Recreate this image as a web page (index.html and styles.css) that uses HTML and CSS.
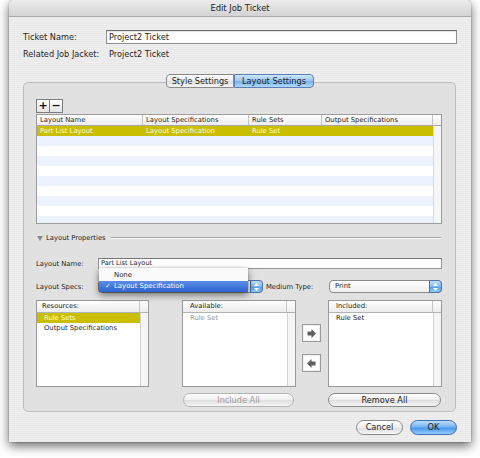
FILE: index.html
```html
<!DOCTYPE html>
<html>
<head>
<meta charset="utf-8">
<title>Edit Job Ticket</title>
<link rel="stylesheet" href="styles.css">
</head>
<body>
<div class="window">
  <div class="titlebar">Edit Job Ticket</div>
  <div class="content">
    <div class="field-row ticket">
      <span class="label">Ticket Name:</span>
      <div class="textbox">Project2 Ticket</div>
    </div>
    <div class="field-row related">
      <span class="label">Related Job Jacket:</span>
      <span class="value">Project2 Ticket</span>
    </div>
    <div class="tabs">
      <div class="tab">Style Settings</div>
      <div class="tab active">Layout Settings</div>
    </div>
    <div class="groupbox">
      <div class="plusminus"><span class="pm">+</span><span class="pm">−</span></div>
      <div class="table">
        <div class="thead">
          <div class="th c1">Layout Name</div>
          <div class="th c2">Layout Specifications</div>
          <div class="th c3">Rule Sets</div>
          <div class="th c4">Output Specifications</div>
          <div class="th corner"></div>
        </div>
        <div class="tbody">
          <div class="rows">
            <div class="row sel"><span class="c1">Part List Layout</span><span class="c2">Layout Specification</span><span class="c3">Rule Set</span><span class="c4"></span></div>
            <div class="row alt"></div>
            <div class="row"></div>
            <div class="row alt"></div>
            <div class="row"></div>
            <div class="row alt"></div>
            <div class="row"></div>
            <div class="row alt"></div>
            <div class="row"></div>
            <div class="row alt"></div>
          </div>
          <div class="vscroll"></div>
        </div>
      </div>
      <div class="disclosure">
        <span class="tri"></span>
        <span class="dtext">Layout Properties</span>
        <span class="sepline"></span>
      </div>
      <div class="prop-row name-row">
        <span class="plabel">Layout Name:</span>
        <div class="smallbox">Part List Layout</div>
      </div>
      <div class="prop-row specs-row">
        <span class="plabel">Layout Specs:</span>
        <div class="popup specs">
          <span class="ptext"></span>
          <span class="stepper"><svg width="5" height="8" viewBox="0 0 5 8"><path d="M2.5 0 L5 3 H0 Z M0 5 H5 L2.5 8 Z" fill="#fff"/></svg></span>
          <div class="menu">
            <div class="mitem">None</div>
            <div class="mitem sel"><span class="check">✓</span>Layout Specification</div>
          </div>
        </div>
        <span class="plabel medium">Medium Type:</span>
        <div class="popup medium-pop">
          <span class="ptext">Print</span>
          <span class="stepper"><svg width="5" height="8" viewBox="0 0 5 8"><path d="M2.5 0 L5 3 H0 Z M0 5 H5 L2.5 8 Z" fill="#fff"/></svg></span>
        </div>
      </div>
      <div class="lists">
        <div class="list res">
          <div class="lhead"><span class="t first">Resources:</span><span class="sc"></span></div>
          <div class="lbody">
            <div class="litems">
              <div class="litem sel">Rule Sets</div>
              <div class="litem">Output Specifications</div>
            </div>
            <div class="lscroll"></div>
          </div>
        </div>
        <div class="list avail">
          <div class="lhead"><span class="t">Available:</span><span class="sc"></span></div>
          <div class="lbody">
            <div class="litems">
              <div class="litem dis">Rule Set</div>
            </div>
            <div class="lscroll"></div>
          </div>
        </div>
        <div class="arrows">
          <div class="abtn"><svg width="9" height="9" viewBox="0 0 9 9"><path d="M0.5 2.5 H4.5 V0 L9 4.5 L4.5 9 V6.5 H0.5 Z" fill="#606060"/></svg></div>
          <div class="abtn"><svg width="9" height="9" viewBox="0 0 9 9"><path d="M8.5 2.5 H4.5 V0 L0 4.5 L4.5 9 V6.5 H8.5 Z" fill="#606060"/></svg></div>
        </div>
        <div class="list incl">
          <div class="lhead"><span class="t">Included:</span><span class="sc"></span></div>
          <div class="lbody">
            <div class="litems">
              <div class="litem">Rule Set</div>
            </div>
            <div class="lscroll"></div>
          </div>
        </div>
      </div>
      <div class="btnrow">
        <div class="pill include disabled">Include All</div>
        <div class="pill remove">Remove All</div>
      </div>
    </div>
    <div class="dlgbtns">
      <div class="pill dlg">Cancel</div>
      <div class="pill dlg ok">OK</div>
    </div>
  </div>
</div>
</body>
</html>
```
FILE: styles.css
```css
* { box-sizing: border-box; }
html, body { margin: 0; padding: 0; background: #fff; }
body {
  font-family: "DejaVu Sans", sans-serif;
  font-size: 8.2px;
  color: #1e1e1e;
  width: 480px;
  height: 458px;
  overflow: hidden;
}
.window {
  margin-left: 9px;
  width: 462px;
  height: 442px;
  border-radius: 5px 5px 0 0;
  background: repeating-linear-gradient(#eeeeee 0 1px, #e9e9e9 1px 2px);
  box-shadow: 0 4px 11px rgba(0,0,0,.6), 0 0 2px rgba(0,0,0,.35);
  display: flex;
  flex-direction: column;
}
.titlebar {
  height: 17px;
  line-height: 16px;
  text-align: center;
  font-size: 8.4px;
  color: #222;
  background: linear-gradient(#ececec, #d3d3d3);
  border-bottom: 1px solid #ababab;
  border-radius: 5px 5px 0 0;
}
.content {
  flex: 1;
  padding: 13px 14px 7px 14px;
  display: flex;
  flex-direction: column;
}
.field-row { display: flex; align-items: center; }
.field-row .label { width: 83px; }
.ticket { height: 14px; }
.textbox {
  flex: 1;
  height: 14px;
  border: 1px solid #909090;
  border-top-color: #6e6e6e;
  background: #fff;
  padding-left: 2px;
  line-height: 12px;
  box-shadow: inset 0 1px 1px rgba(0,0,0,.12);
}
.related { margin-top: 4px; height: 12px; }
.related .value { margin-left: 3px; }

.tabs {
  display: flex;
  justify-content: center;
  margin-top: 14px;
  height: 14px;
  position: relative;
  z-index: 1;
}
.tab {
  width: 68px;
  height: 14px;
  line-height: 12px;
  text-align: center;
  border: 1px solid #8a8a8a;
  border-radius: 4px 0 0 4px;
  background: linear-gradient(#fdfdfd, #ececec 50%, #dedede 51%, #f4f4f4);
}
.tab.active {
  width: 80px;
  border-radius: 0 4px 4px 0;
  border-color: #5b7fb6;
  background: linear-gradient(#cfe5fb, #99c6f2 50%, #76b1ef 51%, #b0dafc);
}

.groupbox {
  margin-top: -6px;
  margin-right: 1px;
  height: 330px;
  border: 1px solid #bdbdbd;
  border-radius: 5px;
  background: #e1e1e1;
  padding: 16px 13px 4px 12px;
  display: flex;
  flex-direction: column;
}
.plusminus { display: flex; height: 14px; margin-bottom: 1px; }
.pm {
  width: 14px;
  height: 14px;
  border: 1px solid #7d7d7d;
  background: linear-gradient(#ffffff, #e4e4e4);
  font-weight: bold;
  font-size: 11px;
  line-height: 12px;
  text-align: center;
  color: #111;
}
.pm + .pm { margin-left: -1px; }

.table { border: 1px solid #9c9c9c; background: #fff; }
.thead {
  display: flex;
  height: 11px;
  border-bottom: 1px solid #a8a8a8;
  background: linear-gradient(#ffffff, #ededed);
}
.th {
  font-size: 6.8px;
  line-height: 10px;
  padding-left: 3px;
  border-right: 1px solid #c3c3c3;
  white-space: nowrap;
}
.c1 { width: 106px; }
.c2 { width: 106px; }
.c3 { width: 73px; }
.c4 { width: 111px; }
.th.corner { flex: 1; border-right: none; }
.tbody { display: flex; height: 97px; }
.rows { width: 396px; overflow: hidden; }
.row { display: flex; height: 10px; font-size: 6.8px; line-height: 10px; }
.row span { padding-left: 3px; white-space: nowrap; }
.row.alt { background: #edf3fe; }
.row.sel { background: #c9bf00; color: #fffbdc; }
.vscroll { flex: 1; background: #f6f6f6; border-left: 1px solid #dadada; }

.disclosure { display: flex; align-items: center; height: 12px; margin-top: 8px; }
.tri {
  width: 0; height: 0;
  border-left: 3px solid transparent;
  border-right: 3px solid transparent;
  border-top: 5px solid #8a8a8a;
  margin-left: 1px;
  margin-right: 3px;
}
.dtext { font-size: 6.8px; }
.sepline {
  flex: 1;
  margin-left: 5px;
  margin-right: 1px;
  border-top: 1px solid #a3a3a3;
  border-bottom: 1px solid #f8f8f8;
}

.prop-row { display: flex; align-items: center; }
.plabel { width: 62px; font-size: 6.8px; }
.name-row { margin-top: 14px; height: 11px; }
.smallbox {
  flex: 1;
  height: 11px;
  background: #fff;
  border: 1px solid #959595;
  border-top-color: #777;
  font-size: 6.6px;
  line-height: 9px;
  padding-left: 2px;
}
.specs-row { margin-top: 11px; height: 13px; }
.popup {
  height: 13px;
  border: 1px solid #8b8b8b;
  border-radius: 4px;
  background: linear-gradient(#ffffff, #efefef);
  display: flex;
  position: relative;
}
.popup.specs { width: 165px; }
.plabel.medium { margin-left: 3px; width: 63px; }
.popup.medium-pop { flex: 1; }
.ptext { flex: 1; padding-left: 5px; font-size: 6.8px; line-height: 11px; }
.stepper {
  width: 13px;
  margin: -1px -1px -1px 0;
  border: 1px solid #4a71ad;
  border-radius: 0 4px 4px 0;
  background: linear-gradient(#c8e1fb, #7cb7f1 50%, #4f99ec 51%, #93ccfd);
  display: flex;
  align-items: center;
  justify-content: center;
}
.menu {
  position: absolute;
  left: 0;
  top: -13px;
  width: 149px;
  padding-top: 2px;
  background: rgba(250,250,250,.98);
  box-shadow: 0 3px 7px rgba(0,0,0,.5), 0 0 1px rgba(0,0,0,.3);
  z-index: 2;
}
.mitem {
  position: relative;
  height: 11px;
  line-height: 11px;
  padding-left: 15px;
  font-size: 6.9px;
  white-space: nowrap;
}
.mitem.sel { background: linear-gradient(#5a8de6, #2f63d1); color: #fff; }
.check { position: absolute; left: 6px; }

.lists { display: flex; height: 87px; margin-top: 7px; }
.list {
  border: 1px solid #9a9a9a;
  background: #fff;
  display: flex;
  flex-direction: column;
}
.list.res { width: 113px; }
.list.avail { width: 114px; margin-left: 33px; }
.list.incl { width: 114px; margin-left: 7px; }
.lhead {
  display: flex;
  height: 12px;
  border-bottom: 1px solid #b3b3b3;
  background: linear-gradient(#ffffff, #ececec);
  font-size: 6.8px;
  line-height: 11px;
}
.lhead .t { flex: 1; padding-left: 7px; border-right: 1px solid #c6c6c6; }
.lhead .t.first { padding-left: 5px; }
.lhead .sc { width: 8px; }
.lbody { flex: 1; display: flex; }
.litems { flex: 1; }
.lscroll { width: 8px; border-left: 1px solid #d4d4d4; background: #f5f5f5; }
.litem { height: 10px; line-height: 10px; padding-left: 7px; font-size: 6.8px; white-space: nowrap; }
.litem.sel { background: #c9bf00; color: #fffbdc; }
.litem.dis { color: #9a9a9a; }
.arrows {
  width: 19px;
  margin-left: 6px;
  padding-top: 24px;
  display: flex;
  flex-direction: column;
  gap: 12px;
}
.abtn {
  width: 19px;
  height: 18px;
  border: 1px solid #9b9b9b;
  background: #fff;
  box-shadow: inset 0 0 0 1px #f0f0f0;
  display: flex;
  align-items: center;
  justify-content: center;
}

.btnrow { display: flex; height: 14px; margin-top: 6px; }
.pill {
  height: 14px;
  border: 1px solid #8a8a8a;
  border-radius: 7px;
  background: linear-gradient(#ffffff, #eeeeee 50%, #dddddd 51%, #f6f6f6);
  text-align: center;
  line-height: 12px;
  font-size: 8.2px;
  color: #1e1e1e;
}
.include { width: 111px; margin-left: 147px; }
.include.disabled { color: #a0a0a0; border-color: #b4b4b4; }
.remove { width: 113px; margin-left: 34px; }

.dlgbtns {
  display: flex;
  justify-content: flex-end;
  gap: 7px;
  height: 15px;
  margin-top: 8px;
}
.pill.dlg { width: 47px; height: 15px; line-height: 13px; border-radius: 8px; }
.pill.ok {
  border-color: #3d6db3;
  background: linear-gradient(#bfdefc, #74b3f3 45%, #4b95eb 55%, #92cdff);
}
```
